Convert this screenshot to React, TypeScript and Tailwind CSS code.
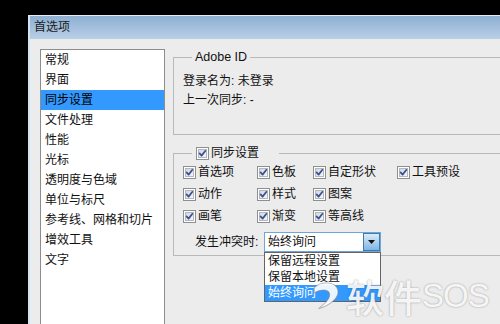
import React from "react";

const Check = () => (
  <svg width="13" height="13" viewBox="0 0 13 13" className="shrink-0">
    <defs>
      <linearGradient id="cbg" x1="0" y1="0" x2="1" y2="1">
        <stop offset="0" stopColor="#cdd6e2" />
        <stop offset="1" stopColor="#f6f8fb" />
      </linearGradient>
    </defs>
    <rect x="0.5" y="0.5" width="12" height="12" fill="#ffffff" stroke="#8e8f8f" />
    <rect x="2.5" y="2.5" width="8" height="8" fill="url(#cbg)" stroke="#b3b8be" />
    <path d="M3.6 6.4 L5.6 8.6 L9.4 3.8" fill="none" stroke="#3c4f8d" strokeWidth="1.7" strokeLinecap="round" strokeLinejoin="round" />
  </svg>
);

const Item = ({ label }: { label: string }) => (
  <div className="flex items-center h-[22px]">
    <Check />
    <span className="ml-[2px]">{label}</span>
  </div>
);

export default function App() {
  const list = [
    "常规",
    "界面",
    "同步设置",
    "文件处理",
    "性能",
    "光标",
    "透明度与色域",
    "单位与标尺",
    "参考线、网格和切片",
    "增效工具",
    "文字",
  ];
  return (
    <div className="relative w-[500px] h-[324px] bg-black overflow-hidden font-['Liberation_Sans','Noto_Sans_CJK_SC',sans-serif] text-[12px] leading-[19px] text-[#111]">
      <div className="ml-[28px] mt-[15px] w-[500px] h-[309px] overflow-hidden bg-[#ececec] border-l-2 border-t border-l-[#d5e2ef] border-t-[#e6edf5] flex flex-col">
        <div className="h-[23px] shrink-0 bg-gradient-to-b from-[#8eafd3] to-[#b9cfe6] flex items-center pl-[4px] text-[#1a1a1a]">
          首选项
        </div>
        <div className="flex pt-[10px] pl-[10px]">
          <div className="w-[125px] h-[300px] shrink-0 bg-white border border-[#8d8d8d]">
            {list.map((t) => (
              <div
                key={t}
                className={
                  t === "同步设置"
                    ? "h-[20px] flex items-center pl-[4px] bg-[#3399ff] text-black"
                    : "h-[20px] flex items-center pl-[4px]"
                }
              >
                {t}
              </div>
            ))}
          </div>
          <div className="ml-[8px] w-[360px] shrink-0 flex flex-col">
            <fieldset className="w-[360px] border border-[#b9b9b9] pl-[9px] pt-[7px] pb-[24px]">
              <legend className="ml-[9px] px-[3px] leading-[16px] font-['Liberation_Sans',sans-serif] text-[12.5px]">
                Adobe ID
              </legend>
              <div>登录名为: 未登录</div>
              <div>上一次同步: -</div>
            </fieldset>
            <fieldset className="w-[360px] mt-[10px] border border-[#b9b9b9] pl-[9px] pb-[3px]">
              <legend className="ml-[9px] pl-[4px] pr-[20px] leading-[16px] flex items-center">
                <Check />
                <span className="ml-[2px]">同步设置</span>
              </legend>
              <div className="grid grid-cols-[74px_56px_84px_120px]">
                <Item label="首选项" />
                <Item label="色板" />
                <Item label="自定形状" />
                <Item label="工具预设" />
                <Item label="动作" />
                <Item label="样式" />
                <Item label="图案" />
                <div />
                <Item label="画笔" />
                <Item label="渐变" />
                <Item label="等高线" />
                <div />
              </div>
              <div className="mt-[5px] h-[20px] flex items-center pl-[12px]">
                <span className="w-[69px]">发生冲突时:</span>
                <div className="relative w-[117px] h-[20px] bg-white border border-[#6fa5d9] flex items-center">
                  <span className="pl-[3px] flex-1">始终询问</span>
                  <div className="w-[17px] h-[18px] border border-[#3d7bb0] bg-gradient-to-b from-[#d9ecfa] to-[#7fb6e2] flex items-center justify-center">
                    <svg width="7" height="4" viewBox="0 0 7 4">
                      <path d="M0 0 H7 L3.5 4 Z" fill="#111" />
                    </svg>
                  </div>
                  <div className="absolute left-[-1px] top-[19px] w-[117px] bg-white border border-[#646464] z-10">
                    <div className="h-[16px] leading-[16px] pl-[3px]">保留远程设置</div>
                    <div className="h-[16px] leading-[16px] pl-[3px]">保留本地设置</div>
                    <div className="h-[16px] leading-[16px] pl-[3px] bg-[#3399ff] text-white">始终询问</div>
                  </div>
                </div>
              </div>
            </fieldset>
          </div>
        </div>
      </div>
      <div className="absolute left-[308px] top-[277px] z-20 flex items-center pointer-events-none">
        <svg width="34" height="32" viewBox="0 0 32 30">
          <path
            d="M6 7 C12 1 26 1 28 9 C30 17 20 24 10 27 C16 22 22 17 20 12 C18 8 11 9 6 12 Z"
            fill="rgba(255,255,255,0.9)"
            stroke="rgba(120,120,120,0.5)"
            strokeWidth="1"
          />
        </svg>
        <span className="ml-[4px] text-[38px] leading-[38px] font-medium text-white/90 font-['Noto_Sans_CJK_SC',sans-serif] [text-shadow:0_0_2px_rgba(0,0,0,0.4)]">
          软件
        </span>
        <span className="text-[33px] leading-[38px] tracking-[-1px] text-white/90 font-['Liberation_Sans',sans-serif] [text-shadow:0_0_2px_rgba(0,0,0,0.4)]">
          SOS
        </span>
      </div>
    </div>
  );
}
